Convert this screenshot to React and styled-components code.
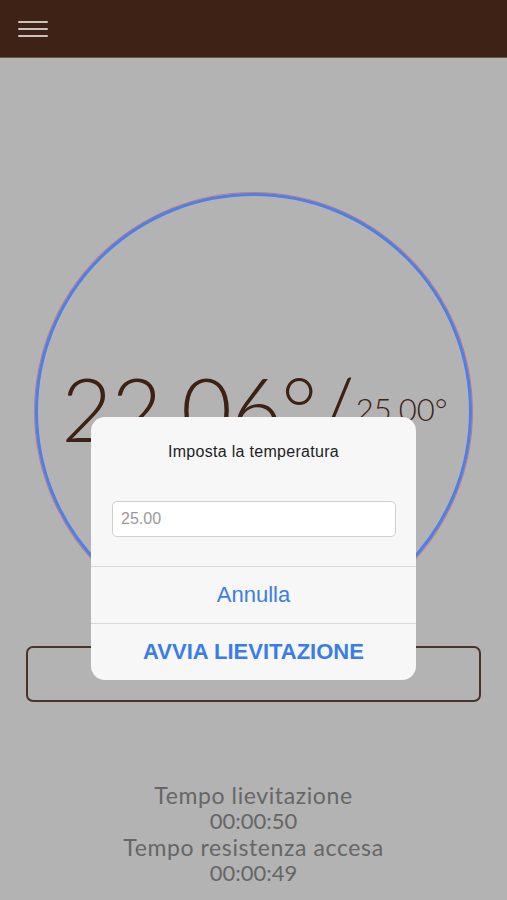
import React from "react";
import styled, { createGlobalStyle } from "styled-components";

const GlobalStyle = createGlobalStyle`
  html, body {
    margin: 0;
    padding: 0;
    background: #b3b3b3;
  }
  body {
    font-family: "Lato", "Liberation Sans", sans-serif;
  }
`;

const Page = styled.div`
  width: 507px;
  height: 900px;
  background: #b3b3b3;
  position: relative;
  overflow: hidden;
`;

const TopBar = styled.header`
  height: 57px;
  background: #3e2215;
  border-bottom: 1px solid #6b5448;
  display: flex;
  align-items: center;
  padding-left: 18px;
`;

const Burger = styled.div`
  display: flex;
  flex-direction: column;
  gap: 5px;
  width: 30px;

  span {
    display: block;
    height: 2px;
    background: #c9c2bd;
    border-radius: 1px;
  }
`;

const Main = styled.main`
  display: flex;
  flex-direction: column;
  align-items: center;
  padding-top: 135px;
`;

const Dial = styled.div`
  width: 431px;
  height: 431px;
  border-radius: 50%;
  border: 3px solid #4d7fe4;
  box-shadow: 0 0 0 1px rgba(205, 70, 95, 0.55);
  display: flex;
  align-items: center;
  justify-content: center;
  color: #3d2214;
`;

const Reading = styled.div`
  display: flex;
  align-items: flex-start;
  margin-top: -8px;
  margin-left: 2px;
`;

const Current = styled.span`
  font-family: "Lato", "Liberation Sans", sans-serif;
  font-weight: 300;
  font-size: 88px;
  letter-spacing: -1px;
  line-height: 1;
`;

const Target = styled.span`
  font-family: "Lato", "Liberation Sans", sans-serif;
  font-weight: 300;
  font-size: 31px;
  line-height: 1;
  margin-left: 2px;
  margin-top: 30px;
`;

const ActionBox = styled.div`
  margin-top: 16px;
  width: 451px;
  height: 52px;
  border: 2px solid #4a3328;
  border-radius: 7px;
`;

const Stats = styled.div`
  margin-top: 80px;
  display: flex;
  flex-direction: column;
  align-items: center;
  color: #666;
  font-family: "Lato", "Liberation Sans", sans-serif;
  line-height: 26px;
`;

const StatLabel = styled.div`
  font-size: 23px;
  letter-spacing: 0.6px;
`;

const StatValue = styled.div`
  font-size: 22px;
`;

const Overlay = styled.div`
  position: absolute;
  inset: 0;
  display: flex;
  justify-content: center;
  padding-top: 417px;
`;

const Dialog = styled.div`
  width: 325px;
  height: 263px;
  background: #f7f7f7;
  border-radius: 14px;
  display: flex;
  flex-direction: column;
  font-family: "Liberation Sans", Arial, sans-serif;
  overflow: hidden;
`;

const DialogTitle = styled.div`
  text-align: center;
  font-size: 16px;
  letter-spacing: 0.3px;
  color: #1e1e1e;
  padding-top: 26px;
  height: 84px;
  box-sizing: border-box;
`;

const InputWrap = styled.div`
  padding: 0 20px 0 21px;
  height: 65px;
`;

const Field = styled.input`
  width: 100%;
  box-sizing: border-box;
  height: 36px;
  border: 1px solid #cfcfcf;
  border-radius: 5px;
  background: #fff;
  font-family: "Liberation Sans", Arial, sans-serif;
  font-size: 16px;
  color: #999;
  padding: 0 8px;
  outline: none;
`;

const DialogButton = styled.div`
  flex: 1;
  border-top: 1px solid #d8d8d8;
  display: flex;
  align-items: center;
  justify-content: center;
  color: #3b7de6;
  font-size: 22px;
  font-weight: ${({ $strong }) => ($strong ? 700 : 400)};
`;

export default function App() {
  return (
    <Page>
      <GlobalStyle />
      <TopBar>
        <Burger>
          <span />
          <span />
          <span />
        </Burger>
      </TopBar>
      <Main>
        <Dial>
          <Reading>
            <Current>22.06°/</Current>
            <Target>25.00°</Target>
          </Reading>
        </Dial>
        <ActionBox />
        <Stats>
          <StatLabel>Tempo lievitazione</StatLabel>
          <StatValue>00:00:50</StatValue>
          <StatLabel>Tempo resistenza accesa</StatLabel>
          <StatValue>00:00:49</StatValue>
        </Stats>
      </Main>
      <Overlay>
        <Dialog>
          <DialogTitle>Imposta la temperatura</DialogTitle>
          <InputWrap>
            <Field defaultValue="25.00" />
          </InputWrap>
          <DialogButton>Annulla</DialogButton>
          <DialogButton $strong>AVVIA LIEVITAZIONE</DialogButton>
        </Dialog>
      </Overlay>
    </Page>
  );
}
